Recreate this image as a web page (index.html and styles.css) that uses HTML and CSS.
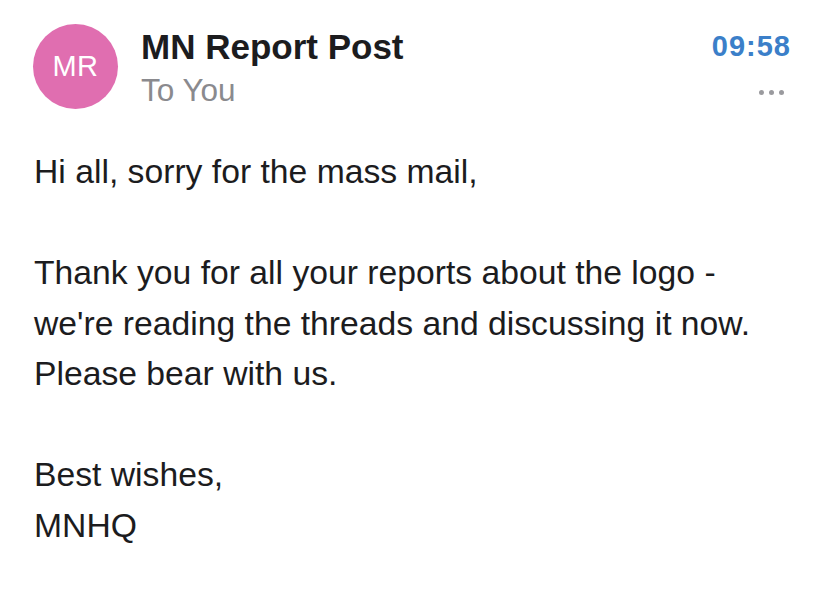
FILE: index.html
```html
<!DOCTYPE html>
<html>
<head>
<meta charset="utf-8">
<link rel="stylesheet" href="styles.css">
</head>
<body>
<div class="mail">
  <header class="head">
    <div class="avatar">MR</div>
    <div class="meta">
      <div class="sender">MN Report Post</div>
      <div class="to">To You</div>
    </div>
    <div class="side">
      <div class="time">09:58</div>
      <div class="more"><span></span><span></span><span></span></div>
    </div>
  </header>
  <div class="body">
    <p>Hi all, sorry for the mass mail,</p>
    <p>Thank you for all your reports about the logo -<br>we're reading the threads and discussing it now.<br>Please bear with us.</p>
    <p>Best wishes,<br>MNHQ</p>
  </div>
</div>
</body>
</html>
```
FILE: styles.css
```css
html, body { margin: 0; padding: 0; background: #fff; }
body { font-family: "Liberation Sans", Arial, sans-serif; color: #1c1c1e; }
.mail { width: 826px; height: 600px; box-sizing: border-box; padding: 24px 36px 0 33px; }
.head { display: flex; align-items: flex-start; }
.avatar {
  width: 85px; height: 85px; border-radius: 50%;
  background: #e06eb0; color: #fff;
  display: flex; align-items: center; justify-content: center;
  font-size: 29px; letter-spacing: 0.5px; flex: none;
}
.meta { flex: 1; margin-left: 23px; padding-top: 2px; }
.sender { font-size: 35px; font-weight: bold; color: #1c1c1e; line-height: 42px; }
.to { font-size: 31.5px; color: #8a8a8e; line-height: 40px; margin-top: 2px; }
.side { display: flex; flex-direction: column; align-items: flex-end; padding-top: 5px; }
.time { font-size: 29px; font-weight: bold; color: #3b7fc9; line-height: 34px; letter-spacing: 1px; margin-right: -1px; }
.more { display: flex; gap: 5px; margin-top: 27px; margin-right: 6px; }
.more span { width: 5px; height: 5px; border-radius: 50%; background: #9a9a9e; }
.body { margin-top: 36px; padding-left: 1px; }
.body p { margin: 0 0 50.5px; font-size: 33.7px; line-height: 50.5px; }
```
